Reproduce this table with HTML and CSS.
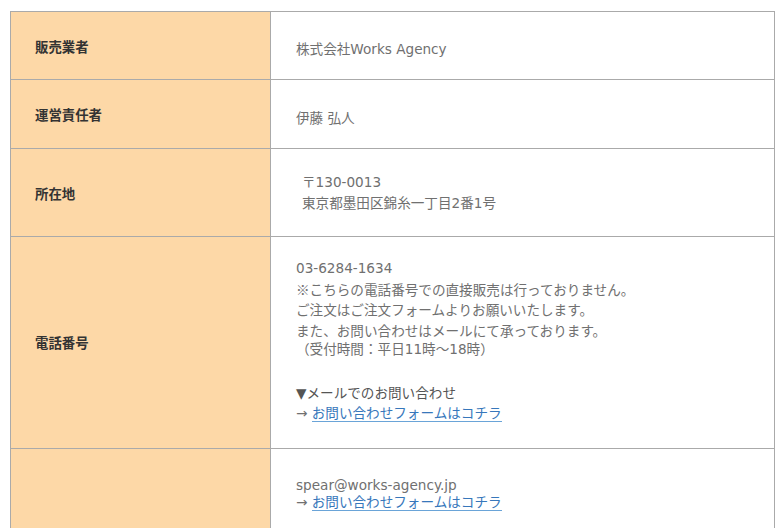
FILE: index.html
```html
<!DOCTYPE html>
<html lang="ja">
<head>
<meta charset="utf-8">
<title>特定商取引法に基づく表記</title>
<link rel="stylesheet" href="styles.css">
</head>
<body>
<table class="info">
  <tr class="row-1">
    <th>販売業者</th>
    <td><div class="val val-a">株式会社Works Agency</div></td>
  </tr>
  <tr>
    <th>運営責任者</th>
    <td><div class="val val-b">伊藤 弘人</div></td>
  </tr>
  <tr>
    <th>所在地</th>
    <td><div class="val addr">〒130-0013<br>東京都墨田区錦糸一丁目2番1号</div></td>
  </tr>
  <tr>
    <th>電話番号</th>
    <td>
      <div class="val tel">
        <div class="tel-main">03-6284-1634<br><span class="cjk">※</span>こちらの電話番号での直接販売は行っておりません。<br>ご注文はご注文フォームよりお願いいたします。<br>また、お問い合わせはメールにて承っております。</div>
        <div class="tel-hours">（受付時間：平日11時～18時）</div>
        <div class="tel-mail"><span class="mail-head">▼メールでのお問い合わせ</span><br>→ <a class="link" href="#">お問い合わせフォームはコチラ</a></div>
      </div>
    </td>
  </tr>
  <tr>
    <th></th>
    <td>
      <div class="val email">spear@works-agency.jp<br>→ <a class="link" href="#">お問い合わせフォームはコチラ</a></div>
    </td>
  </tr>
</table>
</body>
</html>
```
FILE: styles.css
```css
html {
  overflow: hidden;
}
body {
  margin: 0;
  padding: 11px 9px 0 10px;
  background: #ffffff;
  font-family: "DejaVu Sans", "Noto Sans CJK JP", sans-serif;
  font-size: 13.6px;
}
.cjk {
  font-family: "Noto Sans CJK JP", sans-serif;
}
.info {
  border-collapse: separate;
  border-spacing: 0;
  width: 765px;
  table-layout: fixed;
  border-top: 1px solid #aaaaaa;
  border-left: 1px solid #aaaaaa;
}
.info th,
.info td {
  border-right: 1px solid #aaaaaa;
  border-bottom: 1px solid #aaaaaa;
  vertical-align: middle;
  text-align: left;
}
.info th {
  box-sizing: border-box;
  width: 260px;
  padding: 0 24px;
  background: #fdd8a7;
  color: #333333;
  font-family: "Noto Sans CJK JP", sans-serif;
  font-weight: 700;
  font-size: 13.4px;
}
.info td {
  padding: 20px 25px;
  color: #707070;
  line-height: 20px;
}
.val-a {
  padding-top: 7px;
}
.val-b {
  padding-top: 8px;
}
.addr {
  padding: 3px 0 3px 6px;
  line-height: 20.5px;
}
.tel {
  padding-top: 1px;
  margin-bottom: 4px;
}
.tel-main {
  line-height: 20.7px;
}
.tel-hours {
  margin-top: -2px;
  line-height: 18px;
}
.tel-mail {
  margin-top: 25px;
  line-height: 20.5px;
}
.mail-head {
  color: #555555;
}
.email {
  padding-top: 8px;
  line-height: 17.5px;
  margin-bottom: 70px;
}
.link {
  color: #3777bb;
  text-decoration: none;
  border-bottom: 1px solid #6aa4d8;
}
```
